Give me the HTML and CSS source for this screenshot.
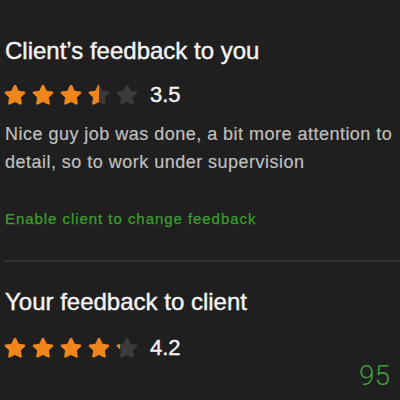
FILE: index.html
```html
<!DOCTYPE html>
<html lang="en">
<head>
<meta charset="utf-8">
<link rel="stylesheet" href="styles.css">
</head>
<body>
<svg width="0" height="0" class="defs">
  <defs>
    <symbol id="star" viewBox="0 0 24 24">
      <path d="M12 2.6c.5 0 .9.3 1.1.7l2.3 4.7 5.2.8c.9.1 1.3 1.2.6 1.9l-3.8 3.7.9 5.2c.2.9-.8 1.6-1.6 1.2L12 18.4l-4.7 2.4c-.8.4-1.8-.3-1.6-1.2l.9-5.2-3.8-3.7c-.7-.7-.3-1.8.6-1.9l5.2-.8 2.3-4.7c.2-.4.6-.7 1.1-.7z"/>
    </symbol>
    <clipPath id="half"><rect x="0" y="0" width="12" height="24"/></clipPath>
    <clipPath id="fifth"><rect x="0" y="0" width="5.5" height="24"/></clipPath>
  </defs>
</svg>

<section class="block">
  <h2 class="title">Client’s feedback to you</h2>
  <div class="rating">
    <div class="stars">
      <svg class="star on" viewBox="0 0 24 24"><use href="#star"/></svg>
      <svg class="star on" viewBox="0 0 24 24"><use href="#star"/></svg>
      <svg class="star on" viewBox="0 0 24 24"><use href="#star"/></svg>
      <svg class="star" viewBox="0 0 24 24"><use href="#star" class="off"/><use href="#star" class="on" clip-path="url(#half)"/></svg>
      <svg class="star off" viewBox="0 0 24 24"><use href="#star"/></svg>
    </div>
    <span class="score">3.5</span>
  </div>
  <p class="comment">Nice guy job was done, a bit more attention to detail, so to work under supervision</p>
  <a class="action" href="#">Enable client to change feedback</a>
</section>

<hr class="divider">

<section class="block second">
  <h2 class="title">Your feedback to client</h2>
  <div class="rating">
    <div class="stars">
      <svg class="star on" viewBox="0 0 24 24"><use href="#star"/></svg>
      <svg class="star on" viewBox="0 0 24 24"><use href="#star"/></svg>
      <svg class="star on" viewBox="0 0 24 24"><use href="#star"/></svg>
      <svg class="star on" viewBox="0 0 24 24"><use href="#star"/></svg>
      <svg class="star" viewBox="0 0 24 24"><use href="#star" class="off"/><use href="#star" class="on" clip-path="url(#fifth)"/></svg>
    </div>
    <span class="score">4.2</span>
  </div>
  <div class="count">95</div>
</section>
</body>
</html>
```
FILE: styles.css
```css
html, body {
  margin: 0;
  padding: 0;
  background: #1f1f1f;
}

body {
  width: 400px;
  height: 400px;
  overflow: hidden;
  font-family: "Liberation Sans", Arial, sans-serif;
  color: #f2f2f2;
}

.defs {
  position: absolute;
  width: 0;
  height: 0;
}

.block {
  padding: 0 0 0 5px;
}

.title {
  margin: 0;
  padding-top: 37px;
  font-size: 24px;
  line-height: 28px;
  font-weight: normal;
  color: #f4f4f4;
  -webkit-text-stroke: 0.4px #f4f4f4;
}

.rating {
  display: flex;
  align-items: center;
  margin-top: 17px;
  height: 26px;
}

.stars {
  display: flex;
  gap: 2px;
  margin-left: -3px;
}

.star {
  width: 26px;
  height: 26px;
  display: block;
}

.on, .star.on { fill: #f0861b; }
.off, .star.off { fill: #3a3a3a; }

.score {
  margin-left: 10px;
  font-size: 22px;
  color: #f4f4f4;
  -webkit-text-stroke: 0.4px #f4f4f4;
}

.comment {
  margin: 12px 0 0;
  font-size: 18px;
  line-height: 28px;
  letter-spacing: 0.48px;
  color: #bfbfbf;
  -webkit-text-stroke: 0.2px #bfbfbf;
}

.action {
  display: block;
  margin-top: 33px;
  font-size: 15px;
  line-height: 20px;
  letter-spacing: 0.95px;
  color: #3ba02c;
  text-decoration: none;
  -webkit-text-stroke: 0.25px #3ba02c;
}

.divider {
  margin: 31px 0 0 4px;
  border: 0;
  border-top: 2px solid #323232;
}

.second .title {
  padding-top: 26px;
}

.second .rating {
  margin-top: 19px;
}

.count {
  display: flex;
  justify-content: flex-end;
  padding-right: 10px;
  margin-top: 1px;
  font-family: Roboto, "Liberation Sans", sans-serif;
  font-weight: 300;
  font-size: 28px;
  line-height: 28px;
  color: #3d9e3a;
}
```
